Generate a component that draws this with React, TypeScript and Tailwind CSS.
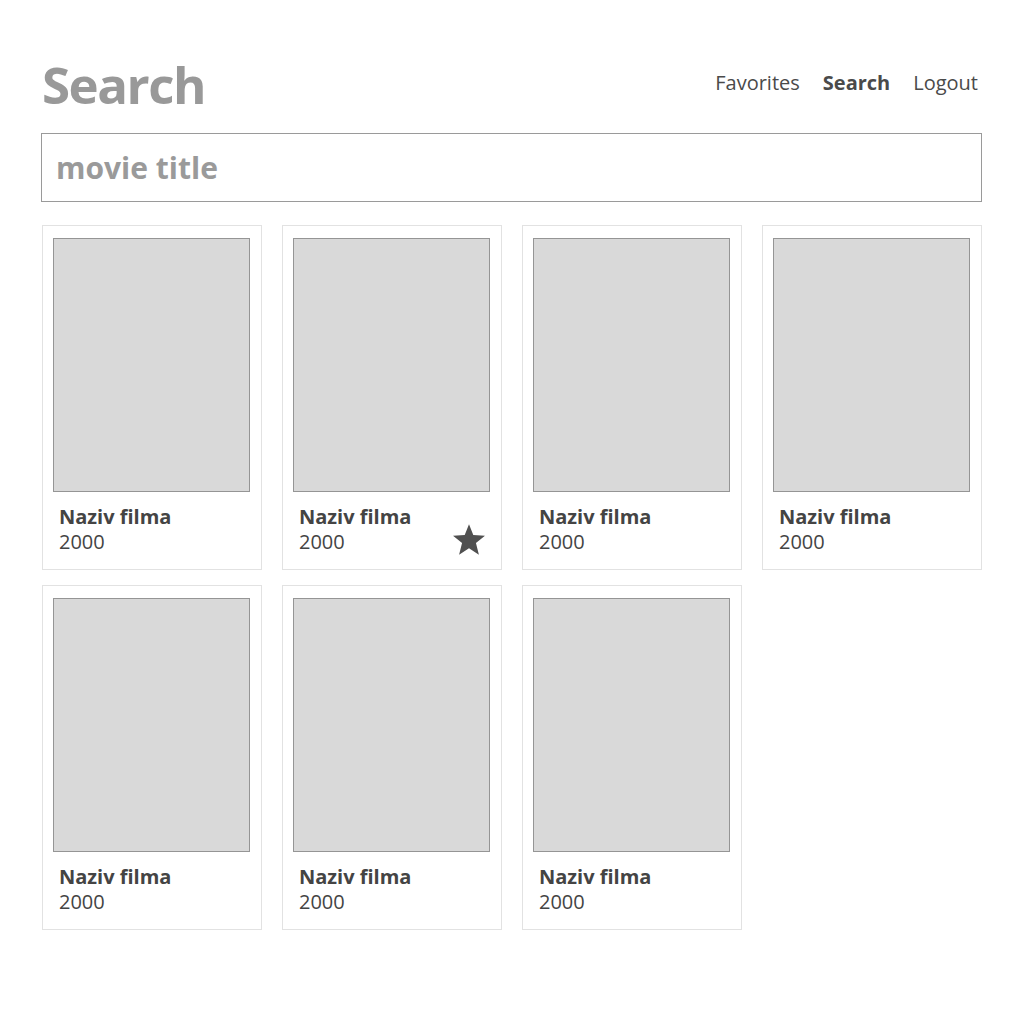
import React from "react";

const movies = [
  { fav: false },
  { fav: true },
  { fav: false },
  { fav: false },
  { fav: false },
  { fav: false },
  { fav: false },
];

function Star() {
  return (
    <svg width="36" height="34" viewBox="0 0 24 23" className="absolute right-[14px] bottom-[12px]">
      <path
        d="M12 0.8 L14.9 8.2 L22.8 8.6 L16.7 13.6 L18.7 21.4 L12 17 L5.3 21.4 L7.3 13.6 L1.2 8.6 L9.1 8.2 Z"
        fill="#505050"
      />
    </svg>
  );
}

export default function App() {
  return (
    <div className="min-h-[1024px] bg-white" style={{ fontFamily: '"Open Sans", sans-serif' }}>
      <div className="w-[941px] ml-[41px] pt-[52px]">
        <div className="flex items-center justify-between">
          <h1 className="text-[51px] font-bold tracking-[-1.5px] text-[#999999] leading-[64px] ml-[1px]">Search</h1>
          <nav className="flex items-center gap-[23px] text-[20px] text-[#4a4a4a] mr-[4px] mt-[-2px]">
            <span>Favorites</span>
            <span className="font-bold">Search</span>
            <span>Logout</span>
          </nav>
        </div>
        <div className="mt-[17px] h-[69px] border border-[#9a9a9a] flex items-center px-[14px]">
          <span className="text-[30px] font-bold text-[#9a9a9a]">movie title</span>
        </div>
        <div className="mt-[23px] ml-[1px] grid grid-cols-[repeat(4,220px)] gap-x-[20px] gap-y-[15px]">
          {movies.map((m, i) => (
            <div key={i} className="relative h-[345px] border border-[#e2e2e2] pt-[12px] px-[10px]">
              <div className="h-[254px] w-[197px] bg-[#d9d9d9] border border-[#959595]" />
              <div className="mt-[12px] pl-[6px] text-[#444444] text-[20px] leading-[25px]">
                <div className="font-bold">Naziv filma</div>
                <div>2000</div>
              </div>
              {m.fav && <Star />}
            </div>
          ))}
        </div>
      </div>
    </div>
  );
}
